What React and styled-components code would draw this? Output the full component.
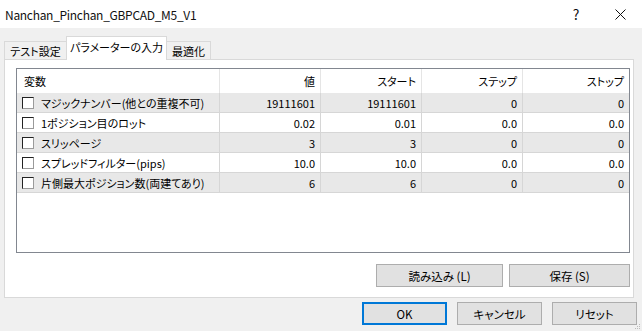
import React from "react";
import styled, { createGlobalStyle } from "styled-components";

const Global = createGlobalStyle`
  html, body { margin: 0; padding: 0; background: #f0f0f0; }
  body { font-family: "Noto Sans CJK JP", "Noto Sans", sans-serif; font-size: 11px; color: #000; }
  * { box-sizing: border-box; }
`;

const Window = styled.div`
  width: 642px;
  height: 331px;
  display: flex;
  flex-direction: column;
  background: #f0f0f0;
  overflow: hidden;
  position: relative;
`;

const TitleBar = styled.div`
  height: 28px;
  background: #fff;
  display: flex;
  align-items: center;
  padding-left: 5px;
`;

const Title = styled.div`
  flex: 1;
  font-size: 12px;
  letter-spacing: -0.3px;
  color: #111;
`;

const CaptionButton = styled.div`
  width: 44px;
  height: 28px;
  display: flex;
  align-items: center;
  justify-content: center;
  font-size: 14px;
  color: #111;
`;

const Body = styled.div`
  flex: 1;
  display: flex;
  flex-direction: column;
  padding: 9px 8px 0 4px;
`;

const TabRow = styled.div`
  display: flex;
  align-items: flex-end;
  height: 23px;
  position: relative;
  z-index: 1;
  margin-bottom: -1px;
`;

const Tab = styled.div`
  display: flex;
  align-items: center;
  justify-content: center;
  white-space: nowrap;
  font-size: 11px;
  font-feature-settings: "palt";
  height: ${(p) => (p.$active ? "24px" : "19px")};
  padding-bottom: ${(p) => (p.$active ? "3px" : "0")};
  background: ${(p) => (p.$active ? "#fff" : "#f0f0f0")};
  border: 1px solid #d9d9d9;
  border-bottom: ${(p) => (p.$active ? "none" : "1px solid #d9d9d9")};
  margin-left: ${(p) => (p.$active ? "-1px" : "0")};
  margin-right: ${(p) => (p.$active ? "-1px" : "0")};
  position: relative;
  z-index: ${(p) => (p.$active ? 2 : 1)};
  width: ${(p) => p.$w}px;
  flex: none;
`;

const Panel = styled.div`
  width: 630px;
  height: 239px;
  background: #fff;
  border: 1px solid #d9d9d9;
  padding: 8px 3px 0 11px;
  display: flex;
  flex-direction: column;
`;

const Table = styled.div`
  width: 614px;
  height: 185px;
  border: 1px solid #828790;
  background: #fff;
  display: grid;
  grid-template-columns: 203px 101px 101px 101px 1fr;
  grid-auto-rows: 20px;
  grid-template-rows: 24px;
  align-content: start;
`;

const HeadCell = styled.div`
  display: flex;
  align-items: center;
  justify-content: ${(p) => (p.$left ? "flex-start" : "flex-end")};
  padding: ${(p) => (p.$left ? "0 0 0 7px" : "0 5px 0 0")};
  border-right: ${(p) => (p.$last ? "none" : "1px solid #e5e5e5")};
  font-feature-settings: "palt";
  font-size: 11px;
  white-space: nowrap;
`;

const Cell = styled.div`
  display: flex;
  align-items: center;
  justify-content: ${(p) => (p.$left ? "flex-start" : "flex-end")};
  padding: ${(p) => (p.$left ? "0 0 0 5px" : "0 5px 0 0")};
  background: ${(p) => (p.$odd ? "#e8e8e8" : "#fff")};
  border-right: ${(p) => (p.$last ? "none" : "1px solid #d6d6d6")};
  border-bottom: 1px solid #d6d6d6;
  font-size: 11px;
  font-feature-settings: "palt";
  white-space: nowrap;
`;

const Check = styled.span`
  width: 12px;
  height: 12px;
  background: #fff;
  border-top: 1px solid #222;
  border-left: 1px solid #222;
  border-right: 1px solid #9a9a9a;
  border-bottom: 1px solid #9a9a9a;
  margin-right: 7px;
  flex: none;
`;

const PanelButtons = styled.div`
  display: flex;
  justify-content: flex-end;
  gap: 6px;
  margin-top: 11px;
  width: 614px;
`;

const Button = styled.div`
  width: ${(p) => p.$w}px;
  height: 23px;
  display: flex;
  align-items: center;
  justify-content: center;
  background: #e1e1e1;
  border: ${(p) => (p.$default ? "2px solid #0078d7" : "1px solid #adadad")};
  font-size: 11.5px;
  font-feature-settings: "palt";
  white-space: nowrap;
`;

const Footer = styled.div`
  display: flex;
  justify-content: flex-end;
  gap: 10px;
  margin-top: 4px;
  margin-right: -3px;
`;

const Grip = styled.svg`
  position: absolute;
  right: 1px;
  bottom: 1px;
`;

const rows = [
  ["マジックナンバー(他との重複不可)", "19111601", "19111601", "0", "0"],
  ["1ポジション目のロット", "0.02", "0.01", "0.0", "0.0"],
  ["スリッページ", "3", "3", "0", "0"],
  ["スプレッドフィルター(pips)", "10.0", "10.0", "0.0", "0.0"],
  ["片側最大ポジション数(両建てあり)", "6", "6", "0", "0"],
];

const heads = ["変数", "値", "スタート", "ステップ", "ストップ"];

export default function App() {
  return (
    <Window>
      <Global />
      <TitleBar>
        <Title>Nanchan_Pinchan_GBPCAD_M5_V1</Title>
        <CaptionButton>?</CaptionButton>
        <CaptionButton>
          <svg width="11" height="11" viewBox="0 0 11 11">
            <path d="M0.5 0.5 L10.5 10.5 M10.5 0.5 L0.5 10.5" stroke="#111" strokeWidth="1" />
          </svg>
        </CaptionButton>
      </TitleBar>
      <Body>
        <TabRow>
          <Tab $w={63}>テスト設定</Tab>
          <Tab $active $w={101}>パラメーターの入力</Tab>
          <Tab $w={45}>最適化</Tab>
        </TabRow>
        <Panel>
          <Table>
            {heads.map((h, i) => (
              <HeadCell key={h} $left={i === 0} $last={i === 4}>{h}</HeadCell>
            ))}
            {rows.map((r, ri) =>
              r.map((c, ci) => (
                <Cell key={ri + "-" + ci} $left={ci === 0} $last={ci === 4} $odd={ri % 2 === 0}>
                  {ci === 0 && <Check />}
                  {c}
                </Cell>
              ))
            )}
          </Table>
          <PanelButtons>
            <Button $w={127}>読み込み (L)</Button>
            <Button $w={121}>保存 (S)</Button>
          </PanelButtons>
        </Panel>
        <Footer>
          <Button $w={85} $default>OK</Button>
          <Button $w={85}>キャンセル</Button>
          <Button $w={85}>リセット</Button>
        </Footer>
      </Body>
      <Grip width="6" height="6" viewBox="0 0 6 6">
        <rect x="4" y="0" width="1" height="1" fill="#bbb" />
        <rect x="2" y="2" width="1" height="1" fill="#bbb" />
        <rect x="4" y="2" width="1" height="1" fill="#bbb" />
        <rect x="0" y="4" width="1" height="1" fill="#bbb" />
        <rect x="2" y="4" width="1" height="1" fill="#bbb" />
        <rect x="4" y="4" width="1" height="1" fill="#bbb" />
      </Grip>
    </Window>
  );
}
